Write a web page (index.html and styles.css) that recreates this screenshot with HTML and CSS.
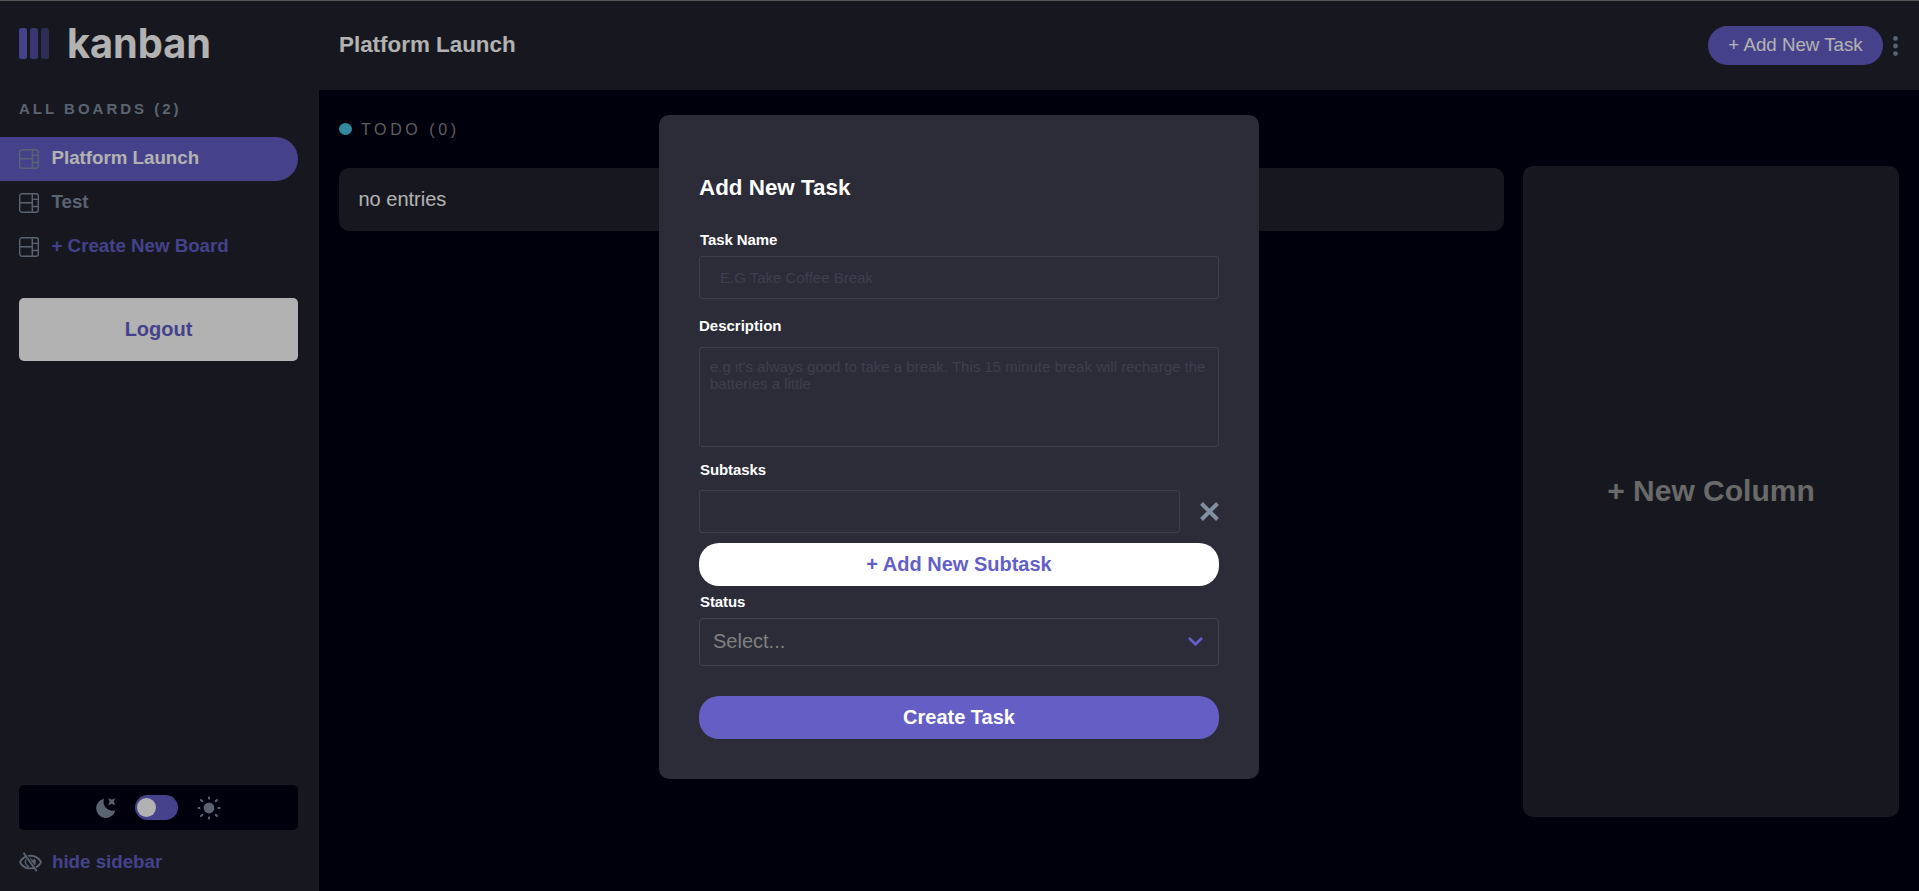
FILE: index.html
```html
<!DOCTYPE html>
<html lang="en">
<head>
<meta charset="utf-8">
<title>Kanban</title>
<link rel="stylesheet" href="styles.css">
</head>
<body>
<svg class="defs" aria-hidden="true">
  <symbol id="board" viewBox="0 0 20 20"><path d="M3 .7h14A2.3 2.3 0 0 1 19.300 3v14a2.300 2.300 0 0 1-2.300 2.300H3A2.300 2.300 0 0 1 .7 17V3A2.300 2.300 0 0 1 3 .7ZM13.300 .7v18.600M.7 9.700h12.600M13.300 6.400h6M13.300 13.500h6" fill="none" stroke="currentColor" stroke-width="1.400"/></symbol>
</svg>
<div class="app">
  <aside class="sidebar">
    <div class="logo">
      <span class="bars"><i class="bar b1"></i><i class="bar b2"></i><i class="bar b3"></i></span>
      <svg class="wordmark" width="164" height="58"><text x="3" y="45" textLength="144" lengthAdjust="spacingAndGlyphs">kanban</text></svg>
    </div>
    <h4 class="boards-title">ALL BOARDS (2)</h4>
    <nav class="boards">
      <a class="board active"><svg class="ico"><use href="#board"/></svg><span class="board-name">Platform Launch</span></a>
      <a class="board"><svg class="ico"><use href="#board"/></svg><span class="board-name">Test</span></a>
      <a class="board create"><svg class="ico"><use href="#board"/></svg><span class="board-name">+ Create New Board</span></a>
    </nav>
    <button class="logout">Logout</button>
    <div class="bottom">
      <div class="theme">
        <svg width="20" height="20" viewBox="0 0 20 20"><path d="M8 .7C6 6.500 10.500 14.300 19.300 12.400A9.700 9.700 0 1 1 8 .7Z" fill="currentColor"/><path d="M12.500 .5l3.200 1.200L18.900 .5l-1.200 3.200 1.200 3.200-3.200-1.200-3.200 1.200 1.200-3.200Z" fill="currentColor" stroke="currentColor" stroke-width=".3"/></svg>
        <span class="toggle"><i class="knob"></i></span>
        <svg width="24" height="24" viewBox="0 0 24 24"><circle cx="12" cy="12" r="5.400" fill="currentColor"/><path d="M12 1.500v1M12 21.500v1M1.500 12h1M21.500 12h1M4 4l1.300 1.300M18.700 18.700l1.300 1.300M4 20l1.300-1.300M18.700 5.300l1.300-1.300" stroke="currentColor" stroke-width="2" stroke-linecap="round"/></svg>
      </div>
      <a class="hide"><svg width="23" height="20" viewBox="0 0 23 20" fill="none" stroke="currentColor"><path d="M1 10.200C5.500 1.600 17.500 1.600 22 10.200 17.500 18.500 5.500 18.500 1 10.200Z" stroke-width="1.800"/><path d="M11 5.500l2 2.200c1.500.4 2.200-.3 2.400-1.300C17.500 8.500 17.300 12.500 14.500 14.400L10.500 9.500Z" fill="currentColor" stroke="none"/><path d="M6.800 7.500c-1 3 .2 6 3 7.200" stroke-width="1.500"/><path class="cut" d="M6.300 1.500 19 19.500" stroke-width="1.600"/><path d="M4.500 .8 17.800 19.300" stroke-width="1.900"/></svg>hide sidebar</a>
    </div>
  </aside>
  <main class="main">
    <header class="header">
      <h2 class="title">Platform Launch</h2>
      <div class="actions">
        <button class="add">+ Add New Task</button>
        <svg width="5" height="20" viewBox="0 0 5 20" fill="currentColor"><circle cx="2.500" cy="2.400" r="2.400"/><circle cx="2.500" cy="10" r="2.400"/><circle cx="2.500" cy="17.600" r="2.400"/></svg>
      </div>
    </header>
    <section class="content">
      <div class="column">
        <div class="col-head"><i class="dot"></i><span class="col-name">TODO (0)</span></div>
        <div class="entry">no entries</div>
      </div>
      <div class="new-column">+ New Column</div>
    </section>
  </main>
</div>
<div class="overlay">
  <form class="modal">
    <h2 class="modal-title">Add New Task</h2>
    <label class="label inset" for="name">Task Name</label>
    <input class="field name" id="name" placeholder="E.G Take Coffee Break">
    <label class="label desc-label" for="desc">Description</label>
    <textarea class="field desc" id="desc" placeholder="e.g it's always good to take a break. This 15 minute break will recharge the batteries a little"></textarea>
    <label class="label inset sub-label" for="sub">Subtasks</label>
    <div class="subtask">
      <input class="field sub" id="sub">
      <svg width="19" height="19" viewBox="0 0 19 19"><path d="M1.500 1.500l16 16M17.500 1.500l-16 16" stroke="currentColor" stroke-width="4"/></svg>
    </div>
    <button class="pill light" type="button">+ Add New Subtask</button>
    <span class="label inset status-label">Status</span>
    <div class="select"><span>Select...</span><svg width="15" height="10" viewBox="0 0 15 10"><path d="M1.800 1.800 7.500 7.200 13.200 1.800" fill="none" stroke="currentColor" stroke-width="2.800" stroke-linecap="round"/></svg></div>
    <button class="pill primary" type="button">Create Task</button>
  </form>
</div>
</body>
</html>
```
FILE: styles.css
```css
* { box-sizing: border-box; margin: 0; }
body { font-family: "Liberation Sans", Arial, sans-serif; background: #000112; color: #fff; height: 891px; overflow: hidden; }
button, input, textarea { font-family: inherit; border: 0; }
svg { display: block; flex: none; }
.defs { position: absolute; width: 0; height: 0; }
.app { display: flex; height: 891px; border-top: 1px solid #7c7c80; }
.sidebar { width: 319px; background: #22232d; display: flex; flex-direction: column; color: #828fa3; }
.logo { display: flex; padding: 12px 0 0 19px; height: 70px; }
.bars { display: flex; gap: 3.500px; padding-top: 15px; width: 45px; }
.bar { width: 7.700px; height: 31px; border-radius: 2.500px; background: #635fc7; }
.b2 { opacity: .75; }
.b3 { opacity: .5; }
.wordmark { overflow: visible; }
.wordmark text { font: 700 41px Inter, sans-serif; fill: #fff; }
.boards-title { font-size: 15px; line-height: 18px; letter-spacing: 3px; margin: 29px 0 0 19px; }
.boards { margin-top: 19px; width: 298px; }
.board { display: flex; align-items: center; gap: 13px; height: 44px; padding-left: 19px; font-size: 18.720px; font-weight: 700; }
.board-name { padding-bottom: 2px; margin-left: -.5px; }
.ico { width: 20px; height: 20px; }
.active { background: #635fc7; border-radius: 0 22px 22px 0; color: #fff; }
.active .ico { color: #828fa3; }
.create { color: #635fc7; padding-bottom: 1px; }
.create .ico { color: #828fa3; }
.logout { margin: 29px 0 0 19px; width: 279px; height: 63px; border-radius: 5px; background: #fff; color: #635fc7; font-size: 20px; font-weight: 700; padding: 0 0 1px; }
.bottom { margin: auto 0 18px 19px; width: 279px; }
.theme { height: 45px; border-radius: 5px; background: #000112; display: flex; align-items: center; justify-content: center; gap: 19px; }
.toggle { width: 43px; height: 25px; border-radius: 13px; background: #635fc7; padding: 3px 2px; }
.knob { display: block; width: 19px; height: 19px; border-radius: 50%; background: #fff; }
.hide { display: flex; align-items: center; gap: 10px; height: 22px; margin-top: 21px; font-size: 18.720px; font-weight: 700; color: #635fc7; }
.hide svg { color: #828fa3; }
.cut { stroke: #22232d; }
.main { flex: 1; display: flex; flex-direction: column; }
.header { height: 89px; background: #22232d; display: flex; justify-content: space-between; padding: 25px 21px 0 20px; }
.title { font-size: 22.400px; line-height: 37px; }
.actions { display: flex; align-items: center; gap: 10px; height: 39px; color: #828fa3; }
.add { width: 175px; height: 39px; border-radius: 20px; background: #635fc7; color: #fff; font-size: 18.720px; padding: 0 0 2px; }
.content { flex: 1; display: flex; gap: 19px; padding: 0 20px; }
.column { flex: 1; padding-top: 26px; }
.col-head { display: flex; align-items: center; gap: 9px; height: 26px; font-size: 16px; letter-spacing: 3.600px; color: #888; }
.col-name { padding-top: 1px; }
.dot { width: 13px; height: 12px; border-radius: 50%; background: #49c4e5; }
.entry { margin-top: 26px; height: 63px; border-radius: 10px; background: #22232d; padding: 0 19.500px; font-size: 20px; line-height: 62px; }
.new-column { width: 376px; height: 651px; margin-top: 76px; border-radius: 10px; background: #22232d; display: flex; align-items: center; justify-content: center; padding-bottom: 2px; font-size: 30px; font-weight: 700; color: #989898; }
.overlay { position: fixed; inset: 0; background: rgba(0, 0, 0, .3); display: flex; justify-content: center; align-items: flex-start; padding: 115px 1px 0 0; }
.modal { width: 600px; height: 664px; border-radius: 10px; background: #2c2c38; padding: 60px 40px 40px; display: flex; flex-direction: column; }
.modal-title { font-size: 22.400px; line-height: 26px; }
.label { font-size: 15px; line-height: 18px; font-weight: 700; margin-top: 30px; letter-spacing: -.1px; }
.inset { padding-left: 1px; }
.field { background: transparent; border: 1px solid #3f3e4d; border-radius: 3px; color: #fff; font-size: 15px; outline: 0; }
.field::placeholder { color: #3e3f4e; opacity: 1; }
.name { height: 43px; margin-top: 7px; padding: 0 20px; }
.desc-label { margin-top: 18px; letter-spacing: 0; }
.desc { height: 100px; margin-top: 12px; padding: 10px; resize: none; line-height: 17px; }
.sub-label { margin-top: 14px; }
.subtask { display: flex; align-items: center; justify-content: space-between; margin-top: 11px; color: #828fa3; }
.sub { width: 481px; height: 43px; }
.pill { height: 43px; border-radius: 20px; font-size: 20px; font-weight: 700; padding: 0 0 1px; }
.light { margin-top: 10px; background: #fff; color: #635fc7; }
.primary { margin-top: 30px; background: #655fc5; color: #fff; }
.status-label { margin-top: 7px; }
.select { display: flex; align-items: center; justify-content: space-between; height: 48px; margin-top: 7px; padding: 0 15px 1px 13px; border: 1px solid #444351; border-radius: 4px; font-size: 20px; color: #808080; }
.select svg { color: #635fc7; }
```
